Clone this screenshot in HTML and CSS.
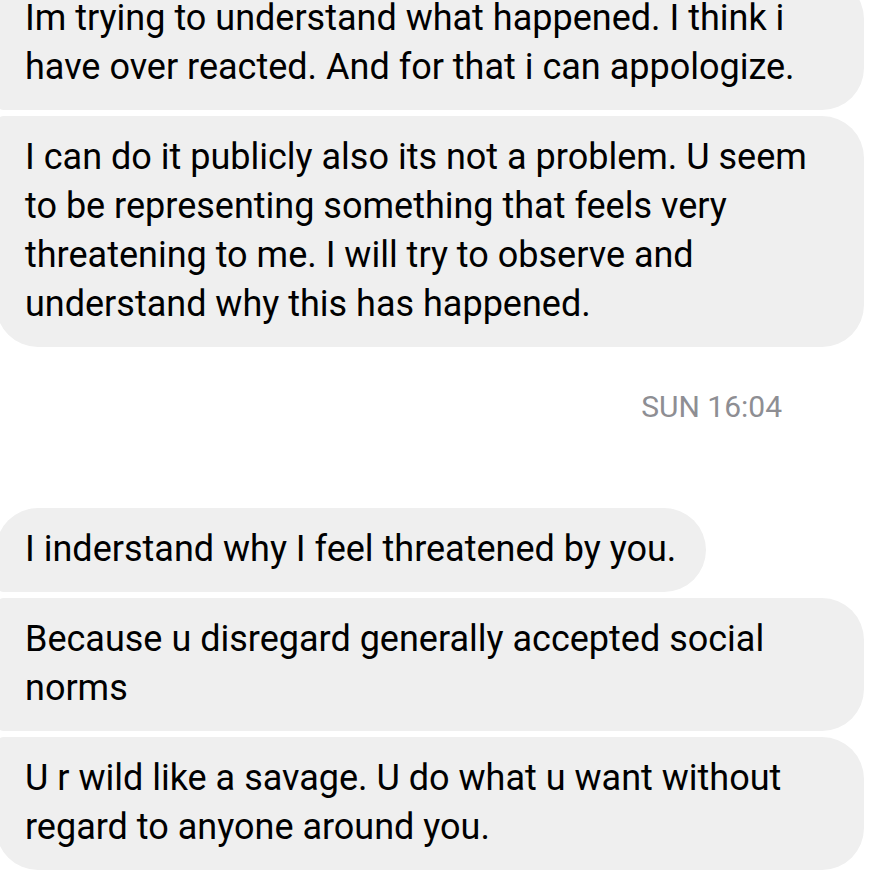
FILE: index.html
```html
<!DOCTYPE html>
<html lang="en">
<head>
  <meta charset="UTF-8" />
  <meta name="viewport" content="width=device-width, initial-scale=1.0" />
  <title>Messages</title>
  <link rel="stylesheet" href="styles.css">
</head>
<body>
  <div class="thread">
    <div class="group">
      <div class="bubble middle">Im trying to understand what happened. I think i have over reacted. And for that i can appologize.</div>
      <div class="bubble last">I can do it publicly also its not a problem. U seem to be representing something that feels very threatening to me. I will try to observe and understand why this has happened.</div>
    </div>

    <div class="stamp">SUN 16:04</div>

    <div class="group">
      <div class="bubble first">I inderstand why I feel threatened by you.</div>
      <div class="bubble middle">Because u disregard generally accepted social norms</div>
      <div class="bubble last">U r wild like a savage. U do what u want without regard to anyone around you.</div>
    </div>
  </div>
</body>
</html>
```

FILE: styles.css
```css
* { box-sizing: border-box; }
body {
  margin: 0;
  background: #fff;
  font-family: Roboto, 'Liberation Sans', sans-serif;
  overflow: hidden;
}
.thread {
  margin-top: -23px;
  margin-left: -4px;
}
.group {
  display: flex;
  flex-direction: column;
  align-items: flex-start;
  gap: 6px;
}
.bubble {
  max-width: 868px;
  background: #efefef;
  color: #000;
  font-size: 36px;
  line-height: 49px;
  padding: 17px 30px 18px 29px;
  border-radius: 8px 42px 42px 8px;
}
.bubble.first { border-top-left-radius: 42px; }
.bubble.last { border-bottom-left-radius: 42px; }
.stamp {
  text-align: right;
  padding-right: 99px;
  color: #8e8e93;
  font-size: 30px;
  line-height: 36px;
  margin: 42px 0 83px;
}
```
